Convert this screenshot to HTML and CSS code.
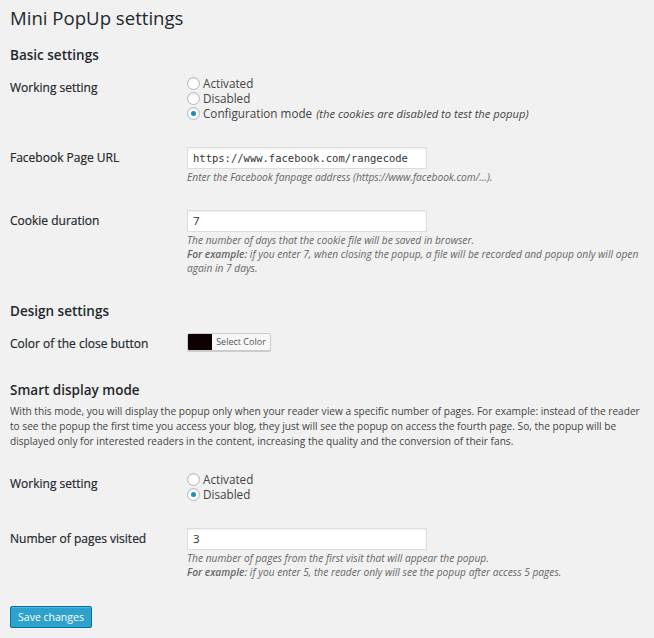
FILE: index.html
```html
<!DOCTYPE html>
<html>
<head>
<meta charset="utf-8">
<link rel="stylesheet" href="styles.css">
</head>
<body>
<div class="wrap">
  <h1 class="title">Mini PopUp settings</h1>

  <h3 class="section first">Basic settings</h3>
  <div class="row radios-row">
    <div class="label">Working setting</div>
    <div class="field">
      <label class="radio"><span class="dot"></span>Activated</label>
      <label class="radio"><span class="dot"></span>Disabled</label>
      <label class="radio"><span class="dot on"></span>Configuration mode <em>(the cookies are disabled to test the popup)</em></label>
    </div>
  </div>

  <div class="row input-row">
    <div class="label">Facebook Page URL</div>
    <div class="field">
      <div class="input mono">https://www.facebook.com/rangecode</div>
      <p class="desc">Enter the Facebook fanpage address (https://www.facebook.com/...).</p>
    </div>
  </div>

  <div class="row input-row">
    <div class="label">Cookie duration</div>
    <div class="field">
      <div class="input">7</div>
      <p class="desc">The number of days that the cookie file will be saved in browser.<br><strong>For example:</strong> if you enter 7, when closing the popup, a file will be recorded and popup only will open again in 7 days.</p>
    </div>
  </div>

  <h3 class="section">Design settings</h3>
  <div class="row color-row">
    <div class="label">Color of the close button</div>
    <div class="field">
      <div class="colorpick"><span class="swatch"></span><span class="pick">Select Color</span></div>
    </div>
  </div>

  <h3 class="section smart">Smart display mode</h3>
  <p class="intro">With this mode, you will display the popup only when your reader view a specific number of pages. For example: instead of the reader to see the popup the first time you access your blog, they just will see the popup on access the fourth page. So, the popup will be displayed only for interested readers in the content, increasing the quality and the conversion of their fans.</p>

  <div class="row radios-row second">
    <div class="label">Working setting</div>
    <div class="field">
      <label class="radio"><span class="dot"></span>Activated</label>
      <label class="radio"><span class="dot on"></span>Disabled</label>
    </div>
  </div>

  <div class="row input-row">
    <div class="label">Number of pages visited</div>
    <div class="field">
      <div class="input">3</div>
      <p class="desc">The number of pages from the first visit that will appear the popup.<br><strong>For example:</strong> if you enter 5, the reader only will see the popup after access 5 pages.</p>
    </div>
  </div>

  <div class="actions"><button class="btn">Save changes</button></div>
</div>
</body>
</html>
```

FILE: styles.css
```css
html, body {
  margin: 0;
  padding: 0;
  background: #f1f1f1;
}
body {
  font-family: "Open Sans", "Liberation Sans", sans-serif;
  color: #444;
  font-size: 12px;
}
.wrap {
  padding: 0 10px;
}
.title {
  margin: 4px 0 0;
  font-size: 18.6px;
  font-weight: 400;
  line-height: 28px;
  color: #23282d;
}
.section {
  margin: 26px 0 0;
  font-size: 13.5px;
  font-weight: 600;
  line-height: 20px;
  color: #23282d;
}
.section.first {
  margin-top: 13px;
}
.section.smart {
  margin-top: 29px;
}
.row {
  display: grid;
  grid-template-columns: 177px 1fr;
}
.label {
  font-size: 12px;
  font-weight: 400;
  line-height: 15px;
  color: #23282d;
  -webkit-text-stroke: 0.2px #23282d;
}
.radios-row {
  margin-top: 11px;
}
.radios-row.second {
  margin-top: 23px;
}
.radios-row .label {
  padding-top: 4px;
}
.input-row {
  margin-top: 26px;
}
.input-row .label {
  padding-top: 3px;
}
.color-row {
  margin-top: 12px;
}
.color-row .label {
  padding-top: 3px;
}
.radio {
  display: flex;
  align-items: center;
  height: 15px;
  font-size: 11.7px;
  line-height: 15px;
  color: #444;
  white-space: nowrap;
}
.radio em {
  margin-left: 4px;
  font-size: 11.2px;
}
.dot {
  box-sizing: border-box;
  width: 13px;
  height: 13px;
  margin-right: 3px;
  border: 1px solid #b4b9be;
  border-radius: 50%;
  background: #fff;
  box-shadow: inset 0 1px 2px rgba(0,0,0,0.1);
  display: flex;
  align-items: center;
  justify-content: center;
  flex: none;
}
.dot.on::after {
  content: "";
  width: 5px;
  height: 5px;
  border-radius: 50%;
  background: #1e8cbe;
}
.input {
  box-sizing: border-box;
  width: 240px;
  height: 22px;
  padding: 0 5px;
  border: 1px solid #ddd;
  background: #fff;
  box-shadow: inset 0 1px 2px rgba(0,0,0,0.07);
  font-size: 11.5px;
  line-height: 20px;
  color: #333;
}
.input.mono {
  font-family: "DejaVu Sans Mono", "Liberation Mono", monospace;
  font-size: 10.5px;
}
.desc {
  margin: 0;
  padding-top: 1px;
  font-size: 10.2px;
  font-style: italic;
  line-height: 14px;
  color: #666;
}
.desc strong {
  font-weight: 600;
}
.colorpick {
  display: flex;
  width: 84px;
  height: 18px;
  box-sizing: border-box;
  border: 1px solid #ccc;
  border-radius: 2px;
  background: #f7f7f7;
  box-shadow: 0 1px 0 #ccc;
  overflow: hidden;
}
.swatch {
  width: 24px;
  background: #0c0000;
}
.pick {
  flex: 1;
  font-size: 9px;
  line-height: 16px;
  text-align: center;
  color: #555;
}
.intro {
  margin: 4px 0 0;
  font-size: 10.15px;
  line-height: 15px;
  color: #444;
}
.actions {
  margin-top: 27px;
}
.btn {
  height: 22px;
  width: 82px;
  padding: 0;
  border: 1px solid #0074a2;
  border-radius: 2px;
  background: #2ea2cc;
  box-shadow: inset 0 1px 0 rgba(120,200,230,0.5), 0 1px 0 rgba(0,0,0,0.15);
  color: #fff;
  font-family: "Open Sans", "Liberation Sans", sans-serif;
  font-size: 10.5px;
  line-height: 20px;
}
```
